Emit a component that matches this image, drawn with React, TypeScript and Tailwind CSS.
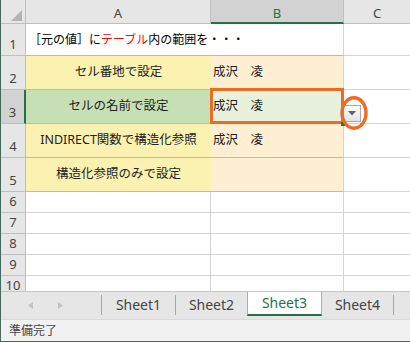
import React from "react";

const HDR = "bg-[#e6e6e6] border-[#bfbfbf]";

function RowHeader({ n, sel }: { n: number; sel?: boolean }) {
  return (
    <div
      className={
        "w-[25px] shrink-0 flex items-end justify-center pb-[5px] leading-[12px] text-[13px] text-[#444] border-b " +
        (sel
          ? "bg-[#d2d2d2] border-b-[#bfbfbf] border-r-2 border-r-[#217346]"
          : "bg-[#e6e6e6] border-[#bfbfbf] border-r")
      }
    >
      {n}
    </div>
  );
}

export default function App() {
  const tabs = [
    { name: "Sheet1", w: "w-[73px]" },
    { name: "Sheet2", w: "w-[71px]" },
  ];
  return (
    <div className="relative w-[410px] h-[342px] bg-white border-l border-b border-[#45695a] flex flex-col overflow-hidden font-['Noto_Sans','Noto_Sans_CJK_JP',sans-serif] text-[#222]">
      <div className="h-[291px] shrink-0 overflow-hidden flex flex-col">
        {/* column headers */}
        <div className="flex h-[24px] shrink-0 text-[13px] leading-[16px] text-[#444]">
          <div className={"w-[25px] shrink-0 border-r border-b relative " + HDR}>
            <svg className="absolute left-0 top-0" width="25" height="24" viewBox="0 0 25 24">
              <polygon points="21,10 21,21 10,21" fill="#b4b4b4" />
            </svg>
          </div>
          <div className={"w-[185px] shrink-0 border-r border-b flex items-end justify-center pb-[2px] " + HDR}>A</div>
          <div className="w-[133px] shrink-0 bg-[#d2d2d2] border-r border-[#bfbfbf] border-b-2 border-b-[#217346] flex items-end justify-center pb-[1px] text-[#217346]">
            B
          </div>
          <div className={"flex-1 border-b flex items-end justify-center pb-[2px] " + HDR}>C</div>
        </div>

        {/* row 1 */}
        <div className="flex h-[32px] shrink-0">
          <RowHeader n={1} />
          <div className="relative z-10 w-[185px] shrink-0 border-b border-[#dcbf4c] flex items-center pl-[3px] text-[12px] text-black whitespace-nowrap">
            <span>
              ［元の値］に<span className="text-[#ff0000]">テーブル</span>内の範囲を・・・
            </span>
          </div>
          <div className="w-[133px] shrink-0 border-b border-b-[#dcbf4c] border-r border-r-[#d4d4d4]" />
          <div className="flex-1 border-b border-[#d4d4d4]" />
        </div>

        {/* row 2 */}
        <div className="flex h-[34px] shrink-0 text-[12.5px]">
          <RowHeader n={2} />
          <div className="w-[185px] shrink-0 bg-[#fbf2b2] border-b border-[#dcbf4c] flex items-center justify-center">
            セル番地で設定
          </div>
          <div className="w-[133px] shrink-0 bg-[#feefd3] border-b border-b-[#dcbf4c] border-r border-r-[#d4d4d4] flex items-center pl-[2px]">
            成沢　凌
          </div>
          <div className="flex-1 border-b border-[#d4d4d4]" />
        </div>

        {/* row 3 */}
        <div className="flex h-[34px] shrink-0 text-[12.5px]">
          <RowHeader n={3} sel />
          <div className="w-[185px] shrink-0 bg-[#c6e0b4] border-b border-[#dcbf4c] flex items-center justify-center">
            セルの名前で設定
          </div>
          <div className="relative w-[133px] shrink-0 bg-[#e8f1dc] border-b border-b-[#dcbf4c] border-r border-r-[#d4d4d4] flex items-center pl-[2px]">
            成沢　凌
            <div className="absolute left-[-1px] top-[-2px] w-[134px] h-[36px] border-[3px] border-[#f06b22]" />
            <div className="absolute left-[130px] top-[32px] w-[4px] h-[4px] bg-[#217346]" />
            <div className="absolute left-[132px] top-[15px] w-[18px] h-[17px] border border-[#a6a6a6] bg-gradient-to-b from-white to-[#e4e4e4] flex items-center justify-center">
              <svg width="8" height="5" viewBox="0 0 8 5">
                <polygon points="0,0 8,0 4,4.5" fill="#5f5f5f" />
              </svg>
            </div>
            <svg className="absolute left-[129px] top-[6px]" width="28" height="34" viewBox="0 0 28 34">
              <ellipse cx="14" cy="17" rx="12" ry="15.2" fill="none" stroke="#f06b22" strokeWidth="3.4" />
            </svg>
          </div>
          <div className="flex-1 border-b border-[#d4d4d4]" />
        </div>

        {/* row 4 */}
        <div className="flex h-[34px] shrink-0 text-[12.5px]">
          <RowHeader n={4} />
          <div className="w-[185px] shrink-0 bg-[#fbf2b2] border-b border-[#dcbf4c] flex items-center justify-center">
            INDIRECT関数で構造化参照
          </div>
          <div className="w-[133px] shrink-0 bg-[#feefd3] border-b border-b-[#dcbf4c] border-r border-r-[#d4d4d4] flex items-center pl-[2px]">
            成沢　凌
          </div>
          <div className="flex-1 border-b border-[#d4d4d4]" />
        </div>

        {/* row 5 */}
        <div className="flex h-[34px] shrink-0 text-[12.5px]">
          <RowHeader n={5} />
          <div className="w-[185px] shrink-0 bg-[#fbf2b2] border-b border-[#dcbf4c] flex items-center justify-center">
            構造化参照のみで設定
          </div>
          <div className="w-[133px] shrink-0 bg-[#feefd3] border-b border-b-[#dcbf4c] border-r border-r-[#d4d4d4]" />
          <div className="flex-1 border-b border-[#d4d4d4]" />
        </div>

        {[6, 7, 8, 9, 10].map((n) => (
          <div key={n} className="flex h-[21px] shrink-0">
            <RowHeader n={n} />
            <div className="w-[185px] shrink-0 border-r border-b border-[#d4d4d4]" />
            <div className="w-[133px] shrink-0 border-r border-b border-[#d4d4d4]" />
            <div className="flex-1 border-b border-[#d4d4d4]" />
          </div>
        ))}
      </div>

      {/* sheet tabs */}
      <div className="h-[28px] shrink-0 bg-[#e6e6e6] border-t border-[#c6c6c6] flex items-start text-[14px] leading-[18px] text-[#444]">
        <div className="w-[100px] h-[27px] shrink-0 flex items-center">
          <svg className="ml-[27px]" width="5" height="7" viewBox="0 0 5 7">
            <polygon points="5,0 5,7 0,3.5" fill="#c2c2c2" />
          </svg>
          <svg className="ml-[25px]" width="5" height="7" viewBox="0 0 5 7">
            <polygon points="0,0 0,7 5,3.5" fill="#c2c2c2" />
          </svg>
        </div>
        <div className="w-px h-[20px] mt-[3px] bg-[#a6a6a6] shrink-0" />
        <div className={"h-[26px] flex items-center justify-center shrink-0 " + tabs[0].w}>{tabs[0].name}</div>
        <div className="w-px h-[20px] mt-[3px] bg-[#a6a6a6] shrink-0" />
        <div className={"h-[26px] flex items-center justify-center shrink-0 " + tabs[1].w}>{tabs[1].name}</div>
        <div className="w-[75px] h-[24px] shrink-0 bg-white border-l border-r border-[#ababab] border-b-2 border-b-[#217346] flex items-center justify-center text-[#217346]">
          Sheet3
        </div>
        <div className="w-[71px] h-[26px] flex items-center justify-center shrink-0">Sheet4</div>
        <div className="w-px h-[20px] mt-[3px] bg-[#a6a6a6] shrink-0" />
      </div>

      {/* status bar */}
      <div className="h-[22px] shrink-0 bg-[#f1f1f1] border-t border-[#dadada] flex items-center pl-[8px] text-[12px] text-[#444]">
        準備完了
      </div>
    </div>
  );
}
